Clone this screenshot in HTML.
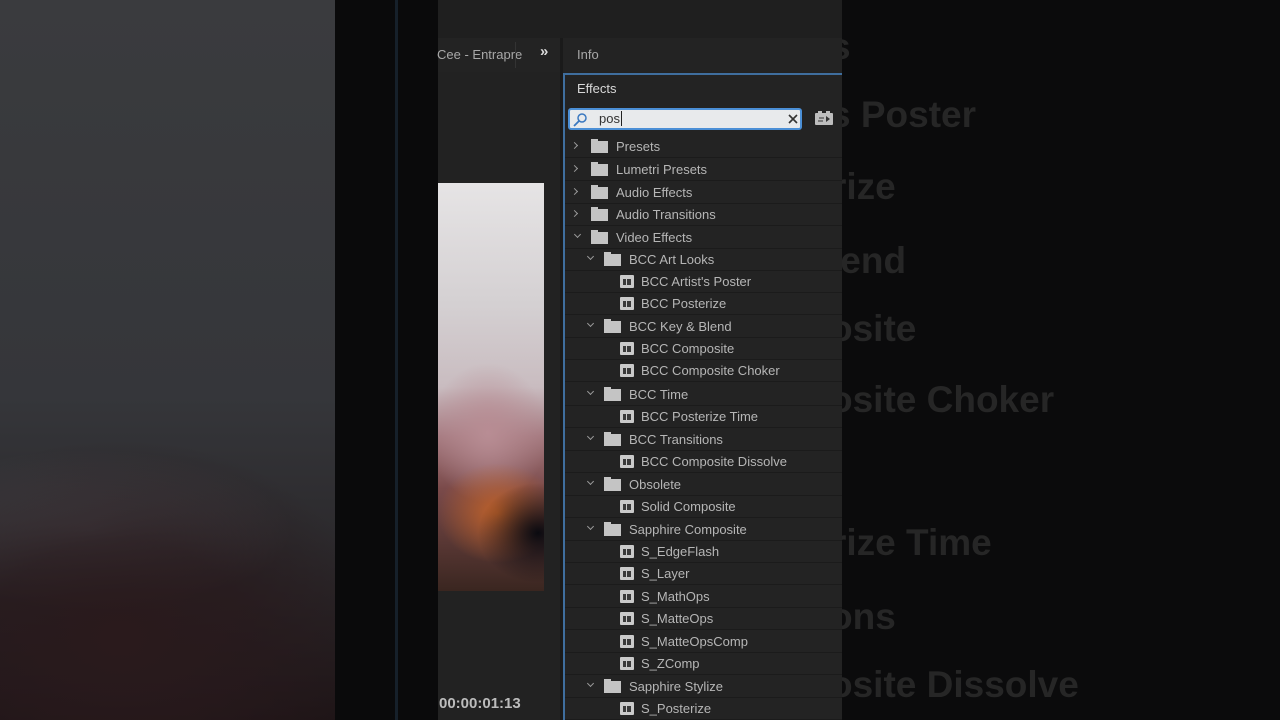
<!DOCTYPE html>
<html><head><meta charset="utf-8"><style>
*{margin:0;padding:0;box-sizing:border-box}
body{width:1280px;height:720px;overflow:hidden;background:#0b0b0c;position:relative;font-family:"Liberation Sans",sans-serif}
.a{position:absolute}
#left{left:0;top:0;width:335px;height:720px;background:
radial-gradient(ellipse 260px 200px at 120px 640px,#2a1a1c 0%,rgba(40,25,28,0.7) 50%,rgba(0,0,0,0) 100%),
radial-gradient(ellipse 200px 80px at 90px 530px,#4a4a4f 0%,rgba(60,60,64,0) 100%),
linear-gradient(180deg,#3a3b3e 0%,#35363a 55%,#2c2a2d 75%,#1d1416 100%)}
#gap{left:335px;top:0;width:103px;height:720px;background:#0a0a0b}
#bline{left:395px;top:0;width:3px;height:720px;background:#16202a}
#mid{left:438px;top:0;width:404px;height:720px;background:#222}
#topbar{left:438px;top:0;width:404px;height:38px;background:#1f1f1f}
.tab{color:#a8a8a8;font-size:13px}
#video{left:438px;top:183px;width:106px;height:408px;background:
radial-gradient(ellipse 60px 50px at 100px 350px,#0a0a10 0%,rgba(10,10,16,0) 100%),
radial-gradient(ellipse 60px 50px at 60px 330px,#c0622a 0%,rgba(190,90,40,0) 100%),
radial-gradient(ellipse 60px 70px at 50px 250px,#b88d94 0%,rgba(184,141,148,0) 100%),
linear-gradient(180deg,#e6e4e5 0%,#d4d0d2 30%,#c9bcc0 50%,#a57a80 62%,#7a4a4a 75%,#3a2620 100%)}
#panel{left:563px;top:73px;width:279px;height:647px;background:#232323;border-left:2px solid #3f6e9e;border-top:2px solid #3f6e9e}
#search{left:568px;top:108px;width:234px;height:22px;background:#e8eaec;border:2px solid #4b8fd6;border-radius:3px}
.row{position:absolute;left:565px;width:277px;height:22px;border-bottom:1px solid #1b1b1b}
.t{position:absolute;top:3px;color:#b6b6b6;font-size:13px;white-space:nowrap}
.ch{position:absolute;top:7px;width:5px;height:5px;border-right:1.3px solid #9a9a9a;border-bottom:1.3px solid #9a9a9a}
.cr{transform:rotate(-45deg)}
.cd{transform:rotate(45deg);top:5px}
.f{position:absolute;top:5px;width:17px;height:12px;background:#c4c4c4}
.f:before{content:"";position:absolute;left:0;top:-2px;width:7px;height:3px;background:#c4c4c4}
.e{position:absolute;top:4px;width:14px;height:13px;background:#cacaca;border-radius:1px}
.e:before{content:"";position:absolute;left:3px;top:4px;width:8px;height:6px;background:#3a3a3a}
.e:after{content:"";position:absolute;left:6px;top:4px;width:1px;height:6px;background:#cacaca}
.ghost{position:absolute;color:#262626;font-size:37px;font-weight:bold;white-space:nowrap;font-family:"Liberation Sans",sans-serif}
</style></head><body>
<div id="left" class="a"></div>
<div id="gap" class="a"></div>
<div id="bline" class="a"></div>
<div id="mid" class="a"></div>
<div id="topbar" class="a"></div>
<div class="a" style="left:438px;top:38px;width:404px;height:34px;background:#232323"></div>
<div class="a tab" style="left:437px;top:47px">Cee - Entrapre</div>
<div class="a" style="left:515px;top:42px;width:1px;height:26px;background:#333"></div>
<div class="a" style="left:540px;top:43px;color:#ddd;font-size:15px;font-weight:bold">»</div>
<div class="a" style="left:560px;top:38px;width:3px;height:682px;background:#1a1a1a"></div>
<div class="a tab" style="left:577px;top:47px">Info</div>
<div id="video" class="a"></div>
<div class="a" style="left:439px;top:695px;color:#bcbcbc;font-size:15px;font-weight:bold">00:00:01:13</div>
<div id="panel" class="a"></div>
<div class="a" style="left:577px;top:81px;color:#d8d8d8;font-size:13px">Effects</div>
<div id="search" class="a"></div>
<svg class="a" style="left:572px;top:112px" width="16" height="16"><circle cx="10" cy="6" r="4" fill="none" stroke="#3a78c0" stroke-width="1.5"/><line x1="7" y1="9" x2="2" y2="14" stroke="#3a78c0" stroke-width="1.8"/></svg>
<div class="a" style="left:599px;top:111px;color:#333;font-size:13px">pos<span style="border-left:1px solid #222;margin-left:1px"></span></div>
<svg class="a" style="left:787px;top:113px" width="12" height="12"><path d="M2 2L10 10M10 2L2 10" stroke="#333" stroke-width="1.6"/></svg>
<svg class="a" style="left:814px;top:110px" width="20" height="17"><rect x="1" y="3" width="18" height="12" rx="1" fill="#bdbdbd"/><rect x="4" y="1" width="4" height="3" fill="#bdbdbd"/><rect x="12" y="1" width="4" height="3" fill="#bdbdbd"/><path d="M12 6L16 9L12 12Z" fill="#333"/><line x1="5" y1="8" x2="10" y2="8" stroke="#333"/><line x1="4" y1="11" x2="9" y2="11" stroke="#333"/></svg>

<div class="row" style="top:136px"><div class="ch cr" style="left:7px"></div><div class="f" style="left:26px"></div><div class="t" style="left:51px">Presets</div></div>
<div class="row" style="top:159px"><div class="ch cr" style="left:7px"></div><div class="f" style="left:26px"></div><div class="t" style="left:51px">Lumetri Presets</div></div>
<div class="row" style="top:182px"><div class="ch cr" style="left:7px"></div><div class="f" style="left:26px"></div><div class="t" style="left:51px">Audio Effects</div></div>
<div class="row" style="top:204px"><div class="ch cr" style="left:7px"></div><div class="f" style="left:26px"></div><div class="t" style="left:51px">Audio Transitions</div></div>
<div class="row" style="top:227px"><div class="ch cd" style="left:10px"></div><div class="f" style="left:26px"></div><div class="t" style="left:51px">Video Effects</div></div>
<div class="row" style="top:249px"><div class="ch cd" style="left:23px"></div><div class="f" style="left:39px"></div><div class="t" style="left:64px">BCC Art Looks</div></div>
<div class="row" style="top:271px"><div class="e" style="left:55px"></div><div class="t" style="left:76px">BCC Artist's Poster</div></div>
<div class="row" style="top:293px"><div class="e" style="left:55px"></div><div class="t" style="left:76px">BCC Posterize</div></div>
<div class="row" style="top:316px"><div class="ch cd" style="left:23px"></div><div class="f" style="left:39px"></div><div class="t" style="left:64px">BCC Key &amp; Blend</div></div>
<div class="row" style="top:338px"><div class="e" style="left:55px"></div><div class="t" style="left:76px">BCC Composite</div></div>
<div class="row" style="top:360px"><div class="e" style="left:55px"></div><div class="t" style="left:76px">BCC Composite Choker</div></div>
<div class="row" style="top:384px"><div class="ch cd" style="left:23px"></div><div class="f" style="left:39px"></div><div class="t" style="left:64px">BCC Time</div></div>
<div class="row" style="top:406px"><div class="e" style="left:55px"></div><div class="t" style="left:76px">BCC Posterize Time</div></div>
<div class="row" style="top:429px"><div class="ch cd" style="left:23px"></div><div class="f" style="left:39px"></div><div class="t" style="left:64px">BCC Transitions</div></div>
<div class="row" style="top:451px"><div class="e" style="left:55px"></div><div class="t" style="left:76px">BCC Composite Dissolve</div></div>
<div class="row" style="top:474px"><div class="ch cd" style="left:23px"></div><div class="f" style="left:39px"></div><div class="t" style="left:64px">Obsolete</div></div>
<div class="row" style="top:496px"><div class="e" style="left:55px"></div><div class="t" style="left:76px">Solid Composite</div></div>
<div class="row" style="top:519px"><div class="ch cd" style="left:23px"></div><div class="f" style="left:39px"></div><div class="t" style="left:64px">Sapphire Composite</div></div>
<div class="row" style="top:541px"><div class="e" style="left:55px"></div><div class="t" style="left:76px">S_EdgeFlash</div></div>
<div class="row" style="top:563px"><div class="e" style="left:55px"></div><div class="t" style="left:76px">S_Layer</div></div>
<div class="row" style="top:586px"><div class="e" style="left:55px"></div><div class="t" style="left:76px">S_MathOps</div></div>
<div class="row" style="top:608px"><div class="e" style="left:55px"></div><div class="t" style="left:76px">S_MatteOps</div></div>
<div class="row" style="top:631px"><div class="e" style="left:55px"></div><div class="t" style="left:76px">S_MatteOpsComp</div></div>
<div class="row" style="top:653px"><div class="e" style="left:55px"></div><div class="t" style="left:76px">S_ZComp</div></div>
<div class="row" style="top:676px"><div class="ch cd" style="left:23px"></div><div class="f" style="left:39px"></div><div class="t" style="left:64px">Sapphire Stylize</div></div>
<div class="row" style="top:698px"><div class="e" style="left:55px"></div><div class="t" style="left:76px">S_Posterize</div></div>

<div class="a" style="left:842px;top:0;width:438px;height:720px;background:#0b0b0c;overflow:hidden">
<div class="ghost" style="left:-12px;top:26px">s</div>
<div class="ghost" style="left:-12px;top:94px">s Poster</div>
<div class="ghost" style="left:-10px;top:166px">rize</div>
<div class="ghost" style="left:-12px;top:240px">lend</div>
<div class="ghost" style="left:-12px;top:308px">osite</div>
<div class="ghost" style="left:-12px;top:379px">osite Choker</div>
<div class="ghost" style="left:-10px;top:522px">rize Time</div>
<div class="ghost" style="left:-12px;top:596px">ons</div>
<div class="ghost" style="left:-12px;top:664px">osite Dissolve</div>
</div>
</body></html>
